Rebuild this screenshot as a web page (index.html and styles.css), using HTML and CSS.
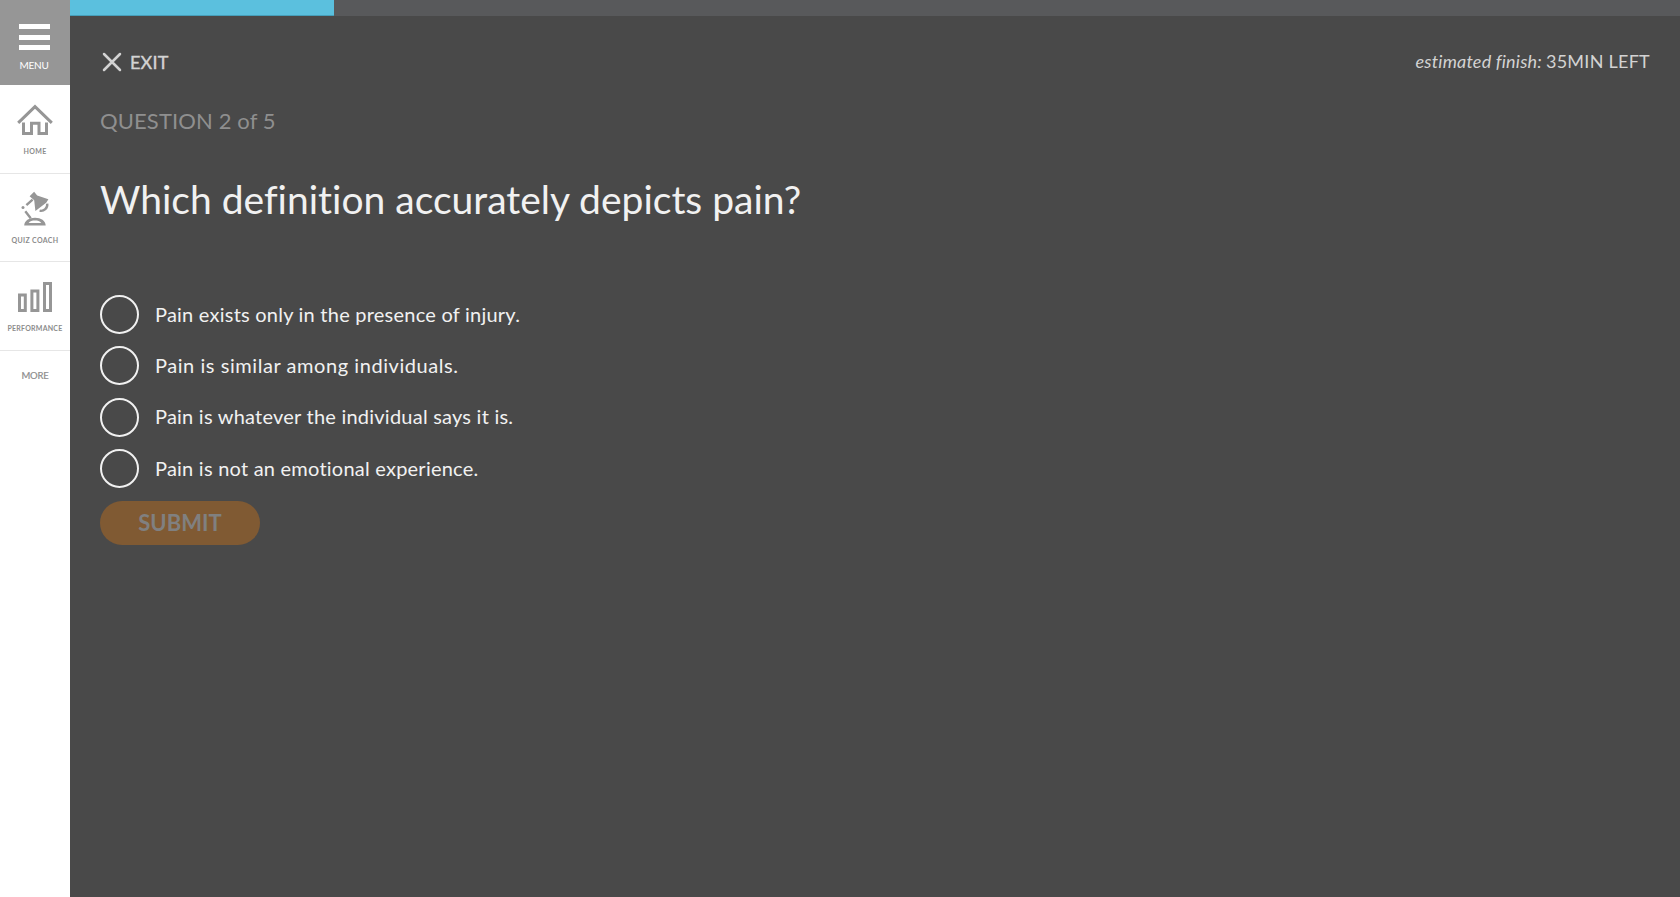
FILE: index.html
```html
<!DOCTYPE html>
<html lang="en">
<head>
<meta charset="utf-8">
<title>Quiz Coach</title>
<link rel="stylesheet" href="styles.css">
</head>
<body>
<nav class="sidebar">
  <button class="menu-button">
    <span class="menu-bars"><i></i><i></i><i></i></span>
    <span class="menu-label">MENU</span>
  </button>
  <a class="nav-item">
    <svg class="nav-icon" viewBox="0 0 36 36" fill="none" stroke="#969696" stroke-width="3">
      <path d="M1.200 21.800 18 5.600 34.800 21.800"/>
      <path d="M6.500 21.500V32.500H14.500V22.200H22V32.500H29.500V21.500"/>
    </svg>
    <span class="nav-label home-label">HOME</span>
  </a>
  <a class="nav-item">
    <svg class="nav-icon" viewBox="0 0 36 36" fill="none" stroke="#969696" stroke-width="2">
      <path fill="#969696" stroke="none" d="M12.600 6.200 17.100 1.800 20.200 5.400 31.400 9.200 29.200 12.800 18.400 21 17.200 10.200Z"/>
      <path stroke-width="2.400" d="M9.400 15.200 15.600 9.600M8.300 21.300 13.700 28.200"/>
      <circle cx="6" cy="17.400" r="1.500" fill="#969696" stroke="none"/>
      <path stroke-width="2.400" d="M30.200 13.600A6.300 6.300 0 0 1 22.600 20.700"/>
      <path fill="#969696" fill-rule="evenodd" stroke="none" d="M7.200 35.600C7.400 30.600 12 27.700 18 27.700S28.500 30.600 28.700 35.600ZM11.600 33.100H24.300C22.800 31.200 20.700 30.600 18 30.600S13 31.200 11.600 33.100Z"/>
    </svg>
    <span class="nav-label quiz-label">QUIZ COACH</span>
  </a>
  <a class="nav-item">
    <svg class="nav-icon" viewBox="0 0 36 36" fill="none" stroke="#969696" stroke-width="3">
      <path d="M2.500 16.900H8.300V32.500H2.500ZM14.900 12.900H20.900V32.500H14.900ZM27.500 5.400H33.500V32.500H27.500Z"/>
    </svg>
    <span class="nav-label performance-label">PERFORMANCE</span>
  </a>
  <a class="more">MORE</a>
</nav>
<main class="page">
  <div class="progress"><div class="progress-fill"></div></div>
  <div class="content">
    <header class="topbar">
      <a class="exit">
        <svg class="exit-icon" viewBox="0 0 20 20" fill="none" stroke="#d3d3d3" stroke-width="2.500" stroke-linecap="round"><path d="M2 2 18 18M18 2 2 18"/></svg>
        <span>EXIT</span>
      </a>
      <div class="estimate"><em>estimated finish:</em><span>35MIN LEFT</span></div>
    </header>
    <div class="counter">QUESTION 2 of 5</div>
    <h1 class="question">Which definition accurately depicts pain?</h1>
    <div class="options">
      <label class="option"><span class="radio"></span><span class="answer">Pain exists only in the presence of injury.</span></label>
      <label class="option"><span class="radio"></span><span class="answer answer-wide">Pain is similar among individuals.</span></label>
      <label class="option"><span class="radio"></span><span class="answer">Pain is whatever the individual says it is.</span></label>
      <label class="option"><span class="radio"></span><span class="answer">Pain is not an emotional experience.</span></label>
    </div>
    <button class="submit" disabled>SUBMIT</button>
  </div>
</main>
</body>
</html>
```

FILE: styles.css
```css
* { box-sizing: border-box; }
body {
  margin: 0;
  display: flex;
  height: 100vh;
  overflow: hidden;
  background: #494949;
  font-family: Lato, "Liberation Sans", sans-serif;
}
button { border: 0; font-family: inherit; }

.sidebar {
  flex: none;
  width: 70px;
  background: #fff;
  display: flex;
  flex-direction: column;
  color: #8c8c8c;
}
.menu-button {
  height: 85px;
  padding: 24px 0 0;
  background: #969696;
  color: #fff;
  display: flex;
  flex-direction: column;
  align-items: center;
}
.menu-bars {
  width: 31px;
  margin-right: 1px;
  display: flex;
  flex-direction: column;
  gap: 5.5px;
}
.menu-bars i { height: 5px; background: #fff; }
.menu-label {
  margin: 9px 2px 0 0;
  font-size: 10px;
  line-height: 12px;
  letter-spacing: -0.26px;
}
.nav-item {
  height: 88.5px;
  padding-top: 16px;
  border-bottom: 1px solid #e6e6e6;
  display: flex;
  flex-direction: column;
  align-items: center;
}
.nav-icon { width: 36px; height: 36px; }
.nav-label {
  margin-top: 9px;
  font-size: 7px;
  font-weight: 700;
  line-height: 10px;
  white-space: nowrap;
}
.home-label { letter-spacing: 0.33px; }
.quiz-label { letter-spacing: 0.33px; }
.performance-label { letter-spacing: 0.23px; }
.more {
  margin-top: 19px;
  text-align: center;
  font-size: 9.5px;
  line-height: 12px;
  letter-spacing: -0.2px;
  -webkit-text-stroke: 0.2px #8c8c8c;
}

.page { flex: 1; display: flex; flex-direction: column; }
.progress { height: 16px; background: #58595b; }
.progress-fill {
  width: 264px;
  height: 16px;
  background: #5bc0de;
  border-bottom: 1px solid #469fba;
}
.content {
  padding: 34px 30px 0;
  display: flex;
  flex-direction: column;
  align-items: flex-start;
}
.topbar {
  width: 100%;
  height: 24px;
  display: flex;
  justify-content: space-between;
  font-size: 18px;
  line-height: 24px;
  color: #d3d3d3;
}
.exit {
  padding-left: 2px;
  display: flex;
  align-items: center;
  gap: 8px;
  letter-spacing: 0.2px;
  -webkit-text-stroke: 0.4px #d3d3d3;
}
.exit-icon { width: 20px; height: 20px; }
.estimate { display: flex; gap: 4px; line-height: 23px; }
.estimate em { letter-spacing: 0.2px; }
.estimate span { letter-spacing: 0.26px; }
.counter {
  margin-top: 34px;
  font-size: 22px;
  line-height: 26px;
  letter-spacing: 0.12px;
  color: #8f8f8f;
}
.question {
  margin: 41px 0 0;
  font-size: 39px;
  font-weight: 400;
  line-height: 48px;
  font-variant-ligatures: none;
  color: #f1f1f1;
}
.options {
  margin-top: 72px;
  display: flex;
  flex-direction: column;
  gap: 12.3px;
}
.option { height: 39px; display: flex; align-items: center; gap: 16px; }
.radio {
  width: 39px;
  height: 39px;
  border: 2px solid #f1f1f1;
  border-radius: 50%;
}
.answer {
  padding-bottom: 1.6px;
  font-size: 20px;
  line-height: 24px;
  letter-spacing: 0.23px;
  color: #f1f1f1;
}
.answer-wide { letter-spacing: 0.56px; }
.submit {
  width: 160px;
  height: 44px;
  margin-top: 13px;
  padding: 0;
  border-radius: 22px;
  background: #805a33;
  color: #808080;
  font-size: 22px;
  font-weight: 700;
}
```
